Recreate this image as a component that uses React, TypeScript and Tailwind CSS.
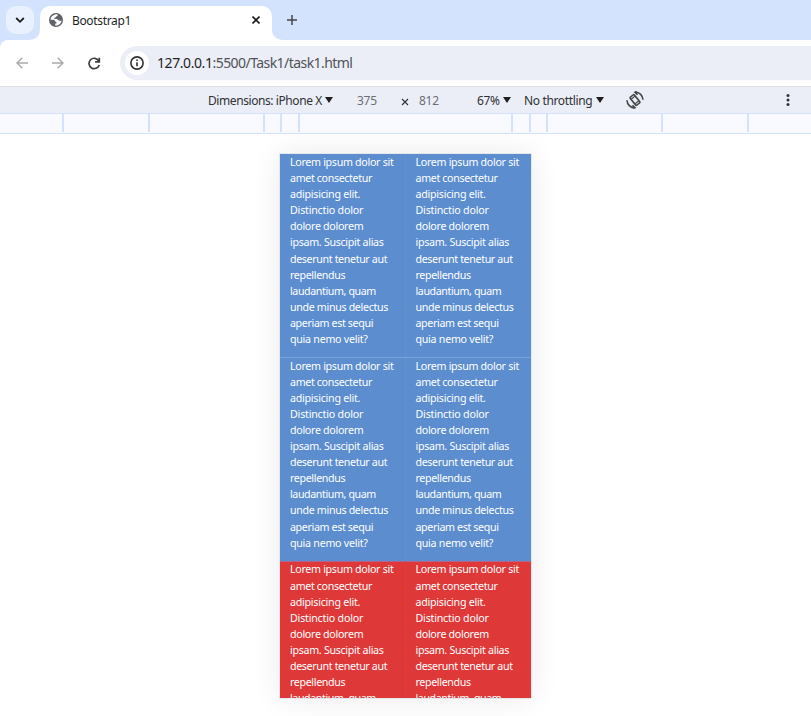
import React from "react";

const lines: { text: string; tracking: string }[] = [
  { text: "Lorem ipsum dolor sit", tracking: "tracking-[-0.3px]" },
  { text: "amet consectetur", tracking: "tracking-[-0.35px]" },
  { text: "adipisicing elit.", tracking: "tracking-[-0.25px]" },
  { text: "Distinctio dolor", tracking: "tracking-[-0.2px]" },
  { text: "dolore dolorem", tracking: "tracking-[-0.3px]" },
  { text: "ipsam. Suscipit alias", tracking: "tracking-[-0.3px]" },
  { text: "deserunt tenetur aut", tracking: "tracking-[-0.36px]" },
  { text: "repellendus", tracking: "tracking-[-0.35px]" },
  { text: "laudantium, quam", tracking: "tracking-[-0.4px]" },
  { text: "unde minus delectus", tracking: "tracking-[-0.33px]" },
  { text: "aperiam est sequi", tracking: "tracking-[-0.36px]" },
  { text: "quia nemo velit?", tracking: "tracking-[-0.26px]" },
];

function Cell({ tone, count = 12 }: { tone: string; count?: number }) {
  return (
    <div className={`h-[203.6875px] pl-[10px] pt-[0.0625px] ${tone}`}>
      {lines.slice(0, count).map((l) => (
        <p key={l.text} className={`h-[16.08px] leading-[16.08px] whitespace-nowrap ${l.tracking}`}>
          {l.text}
        </p>
      ))}
    </div>
  );
}

function TabStrip() {
  return (
    <div className="flex h-[40px] bg-[#d3e3fd]">
      <div className="ml-[6px] mt-[6px] flex h-7 w-7 items-center justify-center rounded-[10px] bg-[#e9f1fe]">
        <svg width="10" height="8" viewBox="0 0 10 8" fill="none" stroke="#1f1f1f" strokeWidth="1.8">
          <path d="M1.2 2 5 5.8 8.8 2" />
        </svg>
      </div>
      <svg className="-ml-[4px] mt-[30px]" width="10" height="10" viewBox="0 0 10 10">
        <path d="M0 10A10 10 0 0 0 10 0V10Z" fill="#fff" />
      </svg>
      <div className="flex h-[34px] w-[232px] mt-[6px] items-start rounded-t-[10px] bg-white">
        <svg className="ml-[9px] mt-[7px]" width="14" height="14" viewBox="0 0 14 14">
          <circle cx="7" cy="7" r="7" fill="#5f6368" />
          <path d="M6.2 1.4c-2.6.4-4.6 2.7-4.7 5.3l2.9.1c1.5.1 1.5 1 1.6 1.8.9 0 1.5.4 1.5 1.2 0 .6-.5.9-1.3.9v1.8c3.400.3 6.3-2 6.4-5.3-1 .8-2 .7-2.7.2C9 6.8 8.7 6 7.5 6H5.300c-.2-1.2.7-1.4 1.5-1.5 0-.9.5-1.3 1.5-1.3l.4-1.5c-.8-.3-1.6-.4-2.5-.3Z" fill="#fff" />
        </svg>
        <span className="ml-[9px] mt-[6px] w-[80px] whitespace-nowrap text-[12px] leading-[17px] tracking-[-0.35px] text-[#1f1f1f]">Bootstrap1</span>
        <svg className="ml-[100px] mt-[10px]" width="8" height="8" viewBox="0 0 8 8" stroke="#1f1f1f" strokeWidth="1.6">
          <path d="m.5.5 7 7M7.5.5l-7 7" />
        </svg>
      </div>
      <svg className="mt-[30px]" width="10" height="10" viewBox="0 0 10 10">
        <path d="M0 0A10 10 0 0 0 10 10H0Z" fill="#fff" />
      </svg>
      <svg className="ml-[5px] mt-[15px]" width="10" height="10" viewBox="0 0 10 10" stroke="#444746" strokeWidth="1.5">
        <path d="M5 0v10M0 5h10" />
      </svg>
    </div>
  );
}

function AddressBar() {
  return (
    <div className="bg-[#d3e3fd]">
      <div className="flex h-[46px] items-center rounded-tl-[8px] bg-white">
        <svg className="ml-[16px]" width="12" height="12" viewBox="0 0 12 12" fill="none" stroke="#a9abad" strokeWidth="1.5">
          <path d="M12 6H1M6.3.7 1 6l5.3 5.3" />
        </svg>
        <svg className="ml-[24px]" width="12" height="12" viewBox="0 0 12 12" fill="none" stroke="#a9abad" strokeWidth="1.5">
          <path d="M0 6h11M5.7.7 11 6l-5.3 5.3" />
        </svg>
        <svg className="ml-[24px]" width="13" height="13" viewBox="0 0 13 13" fill="none" stroke="#3c3f41" strokeWidth="1.7">
          <path d="M10.700 3.800A5.200 5.200 0 1 0 11.200 8M11.300.8v4.100H7.100" />
        </svg>
        <div className="ml-[19px] flex h-[34px] flex-1 items-center rounded-l-full bg-[#ebeef7]">
          <div className="ml-[5px] flex h-6 w-6 items-center justify-center rounded-full bg-white">
            <svg width="14" height="14" viewBox="0 0 14 14" fill="none" stroke="#303134" strokeWidth="1.6">
              <circle cx="7" cy="7" r="6.1" />
              <path d="M7 6.2v4M7 3.5V5" />
            </svg>
          </div>
          <span className="ml-[8px] whitespace-nowrap text-[14px] leading-[20px] text-[#505356]">
            <span className="tracking-[-0.42px] text-[#1f1f1f]">127.0.0.1</span>
            <span className="tracking-[-0.56px]">:5500/Task1/task1.html</span>
          </span>
        </div>
      </div>
    </div>
  );
}

function Caret() {
  return (
    <svg className="-mt-[2px]" width="8" height="6" viewBox="0 0 8 6">
      <path d="M0 0h8L4 6Z" fill="#1f1f1f" />
    </svg>
  );
}

function DeviceBar() {
  return (
    <div className="flex h-[27px] items-center whitespace-nowrap border-t border-[#dfe1df] bg-[#ebeef6] pt-px text-[12px] leading-[16px] text-[#303134]">
      <div className="ml-[208px] flex w-[149px] items-center">
        <span className="w-[117px] tracking-[-0.42px]">Dimensions: iPhone X</span>
        <Caret />
      </div>
      <span className="w-[44px] tracking-[-0.3px] text-[#6b6e72]">375</span>
      <svg className="mt-[3px]" width="8" height="8" viewBox="0 0 8 8" stroke="#303134" strokeWidth="1.1">
        <path d="m1 1 6 6M7 1 1 7" />
      </svg>
      <span className="ml-[10px] w-[58px] tracking-[-0.3px] text-[#6b6e72]">812</span>
      <div className="flex w-[47px] items-center">
        <span className="w-[26px] tracking-[-0.4px]">67%</span>
        <Caret />
      </div>
      <div className="flex w-[102px] items-center">
        <span className="w-[72px] tracking-[-0.35px]">No throttling</span>
        <Caret />
      </div>
      <svg className="-mt-px" width="18" height="18" viewBox="0 0 18 18" fill="none" stroke="#444746" strokeWidth="1.6">
        <g transform="rotate(-40 9 9)">
          <rect x="6.3" y="3.9" width="5.4" height="10.2" rx="1" />
          <path d="M6.500 6h5M6.500 12h5" strokeWidth="1.2" />
        </g>
        <path d="M1 9.200A8 8 0 0 0 8.800 17M6.500 14.200 9 16.700 7.200 17.400" />
        <path d="M17 8.800A8 8 0 0 0 9.200 1M11.500 3.800 9 1.300 10.800.6" />
      </svg>
      <svg className="-mt-px ml-[142px]" width="4" height="12" viewBox="0 0 4 12" fill="#303134">
        <circle cx="2" cy="1.5" r="1.5" />
        <circle cx="2" cy="6" r="1.5" />
        <circle cx="2" cy="10.5" r="1.5" />
      </svg>
    </div>
  );
}

const ruler = ["w-[86px]", "w-[115px]", "w-[17px]", "w-[18px]", "w-[213px]", "w-[18px]", "w-[17px]", "w-[115px]", "w-[86px]", "w-[64px]"];

export default function App() {
  return (
    <div className="h-[716px] w-[811px] overflow-hidden bg-white font-['Noto_Sans','Open_Sans',sans-serif]">
      <TabStrip />
      <AddressBar />
      <DeviceBar />
      <div className="flex h-[21px] border-y border-[#d3e3fd] bg-[#f8faff] pl-[62px]">
        {ruler.map((w, i) => (
          <div key={i} className={`h-[18px] shrink-0 border-l-2 border-[#d3e3fd] ${w}`} />
        ))}
      </div>
      <div className="ml-[280px] mt-[20px] h-[544px] w-[251px] overflow-hidden bg-[#5b8dcf] text-[10.67px] text-white shadow-[0_0_0_1px_#e4e8ed,0_0_28px_rgba(0,0,0,0.09)]">
        <div className="grid grid-cols-2">
          <Cell tone="bg-[#5b8dcf] border-r border-[#6191d1]" />
          <Cell tone="bg-[#5b8dcf]" />
          <Cell tone="bg-[#5b8dcf] border-r border-[#6191d1] shadow-[0_-1px_0_#79a2da]" />
          <Cell tone="bg-[#5b8dcf] shadow-[0_-1px_0_#79a2da]" />
          <Cell count={9} tone="bg-[#df3838] border-r border-[#e03d3d] shadow-[inset_0_1px_0_#b0658c]" />
          <Cell count={9} tone="bg-[#df3838] shadow-[inset_0_1px_0_#b0658c]" />
        </div>
      </div>
    </div>
  );
}
